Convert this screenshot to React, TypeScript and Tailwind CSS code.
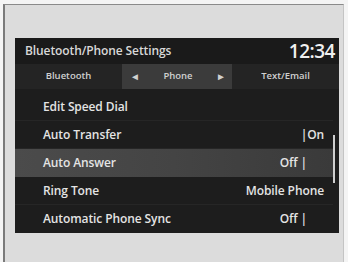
import React from "react";

type Row = { label: string; value?: string; valuePad?: string; active?: boolean };

const ROWS: Row[] = [
  { label: "Edit Speed Dial" },
  { label: "Auto Transfer", value: "|On", valuePad: "pr-[9px]" },
  { label: "Auto Answer", value: "Off |", valuePad: "pr-[26px]", active: true },
  { label: "Ring Tone", value: "Mobile Phone", valuePad: "pr-[9px]" },
  { label: "Automatic Phone Sync", value: "Off |", valuePad: "pr-[26px]" },
];

export default function App() {
  return (
    <div
      className="w-[348px] h-[262px] bg-[#f4f4f4] pl-[3px] pt-[4px] overflow-hidden"
      style={{ fontFamily: '"Open Sans", "Noto Sans", sans-serif' }}
    >
      <div className="w-[341px] h-[258px] bg-[#dcdcdc] border-l-2 border-t border-r border-l-[#7a7a7a] border-t-[#8a8a8a] border-r-[#c4c4c4] pl-[10px] pt-[33px]">
        <div className="w-[324px] h-[195px] bg-[#1d1d1d] flex flex-col text-[#e4e4e4]">
          {/* title */}
          <div className="h-[26px] flex items-center justify-between pl-[10px] pr-[4px] bg-[#1a1a1a]">
            <span className="text-[12px] font-semibold tracking-[-0.1px] text-[#d8d8d8]">
              Bluetooth/Phone Settings
            </span>
            <span className="text-[19px] font-semibold tracking-[-0.5px] leading-none text-[#f0f0f0]">
              12:34
            </span>
          </div>

          {/* tabs */}
          <div className="h-[25px] flex bg-[#242424] text-[9.5px] font-semibold text-[#d0d0d0]">
            <div className="w-[107px] flex items-center justify-center">Bluetooth</div>
            <div className="w-[110px] flex items-center justify-between pl-[8px] pr-[6px] bg-[#3b3b3b]">
              <span className="text-[10px]">◄</span>
              <span>Phone</span>
              <span className="text-[10px]">►</span>
            </div>
            <div className="flex-1 flex items-center justify-center">Text/Email</div>
          </div>

          {/* list */}
          <div className="flex mt-[4px]">
            <div className="flex-1 flex flex-col">
              {ROWS.map((row, i) => (
                <div
                  key={row.label}
                  className={`h-[28px] flex items-center justify-between pl-[28px] text-[12px] font-semibold ${
                    row.active
                      ? "bg-gradient-to-r from-[#4b4b4b] via-[#444444] to-[#3a3a3a]"
                      : i < ROWS.length - 1
                      ? "border-b border-[#262626]"
                      : ""
                  }`}
                >
                  <span className="tracking-[-0.1px]">{row.label}</span>
                  {row.value && (
                    <span className={`${row.valuePad} tracking-[-0.1px]`}>{row.value}</span>
                  )}
                </div>
              ))}
            </div>
            <div className="w-[6px] flex justify-start">
              <div className="mt-[42px] h-[48px] w-[2px] bg-[#cfcfcf]" />
            </div>
          </div>
        </div>
      </div>
    </div>
  );
}
